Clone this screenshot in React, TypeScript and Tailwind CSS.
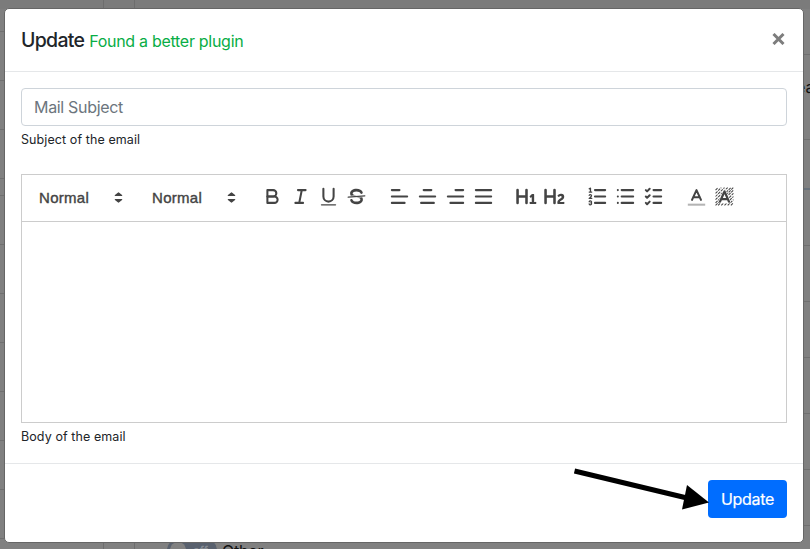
import type { ReactNode } from "react";

function Icon({ children }: { children: ReactNode }) {
  return (
    <button className="flex h-7 w-7 items-center justify-center">
      <svg
        viewBox="0 0 18 18"
        className="mb-[3px] h-[23px] w-[23px] shrink-0"
        fill="none"
        stroke="#444"
        strokeWidth="1.6"
        strokeLinecap="round"
        strokeLinejoin="round"
      >
        {children}
      </svg>
    </button>
  );
}

function Lines({ rows }: { rows: number[][] }) {
  return <>{rows.map(([a, b, y]) => <path key={y} d={`M${a},${y}H${b}`} />)}</>;
}

function Picker() {
  return (
    <button className="mr-[15px] flex h-6 w-[98px] items-center justify-between pl-[9px] font-['Liberation_Sans',sans-serif] text-[15px] text-[#444] [-webkit-text-stroke:0.4px_#444]">
      <span className="tracking-[0.3px]">Normal</span>
      <svg viewBox="0 0 18 18" className="mb-[2px] h-[19px] w-[19px]" fill="#444" stroke="#444" strokeWidth="1.2" strokeLinejoin="round">
        <path d="M6,11L9,13.3L12,11ZM6,7L9,4.7L12,7Z" />
      </svg>
    </button>
  );
}

function Group({ children }: { children: ReactNode }) {
  return <div className="mr-[15px] flex">{children}</div>;
}

const leftRows = [31, 80, 129, 178, 195, 244, 293, 342, 391, 440, 489, 538];
const rightRows = [54, 139, 245, 301, 357, 413, 469, 525];

export default function App() {
  return (
    <div className="relative h-[549px] w-[810px] overflow-hidden bg-[#808080] font-[Inter,sans-serif]">
      <svg className="absolute inset-0" width="810" height="549" shapeRendering="crispEdges">
        <rect width="810" height="9" fill="#7b7b7b" />
        <path d="M103.5,0V549M134.5,0V549" stroke="#6d6d6d" />
        {leftRows.map((y) => <path key={y} d={`M0,${y}.5H104`} stroke="#6f6f6f" />)}
        {rightRows.map((y) => <path key={y} d={`M134,${y}.5H810`} stroke="#6f6f6f" />)}
        <rect x="134" y="188" width="676" height="2" fill="#67717b" />
      </svg>
      <span className="absolute left-[796px] top-[77px] text-[16px] leading-5 text-[#111]">ea</span>
      <div className="absolute left-[167px] top-[539px] flex h-[22px] w-[50px] items-center rounded-full bg-[#59616e] pl-[3px]">
        <span className="h-4 w-4 rounded-full bg-[#818181]" />
        <span className="ml-[7px] text-[11px] font-bold leading-3 text-[#858b93]">off</span>
      </div>
      <span className="absolute left-[222px] top-[541px] text-[16px] leading-5 tracking-[-0.2px] text-[#111]">Other</span>

      <div className="absolute left-[4px] top-[8px] flex h-[535px] w-[800px] flex-col rounded-[5px] border border-[#666] bg-white">
        <header className="flex h-[63px] shrink-0 items-center justify-between border-b border-[#e5e7e9] px-4">
          <h5 className="flex items-baseline whitespace-nowrap text-[19.5px] font-medium leading-[30px] tracking-[-0.72px] text-[#212529]">
            Update
            <small className="ml-[5px] text-[16px] font-normal tracking-[-0.29px] text-[#08ad45]">Found a better plugin</small>
          </h5>
          <button aria-label="Close" className="mr-[2px] mt-[-3px]">
            <svg width="13" height="12" viewBox="0 0 13 12" stroke="#7d7d7d" strokeWidth="3">
              <path d="M1.5,1L11.5,11M11.5,1L1.5,11" />
            </svg>
          </button>
        </header>
        <main className="flex-1 px-4 pt-4">
          <input
            placeholder="Mail Subject"
            className="block h-[38px] w-full rounded-[4px] border border-[#ced4da] px-3 text-[16px] tracking-[-0.32px] text-[#495057] placeholder:text-[#6c757d]"
          />
          <small className="mt-1 block text-[12.5px] leading-[19px] tracking-[0.09px] text-[#212529]">Subject of the email</small>
          <div className="mt-[25px] flex h-12 items-center border border-[#ccc] pl-2">
            <Picker />
            <Picker />
            <span className="w-[2px]" />
            <Group>
              <Icon>
                <path d="M5,4H9.5A2.5,2.5,0,0,1,12,6.5A2.5,2.5,0,0,1,9.5,9H5Z" />
                <path d="M5,9H10.5A2.5,2.5,0,0,1,13,11.5A2.5,2.5,0,0,1,10.5,14H5Z" />
              </Icon>
              <Icon><path d="M7,4H13M5,14H11M8,14L10,4" /></Icon>
              <Icon>
                <path d="M5,3V9a4,4,0,0,0,8,0V3" />
                <rect x="3" y="15" width="12" height="1" rx=".5" fill="#444" stroke="none" />
              </Icon>
              <Icon>
                <path d="M15.5,8.5L2.5,9.5" strokeWidth="1" />
                <g fill="#444" stroke="none">
                  <path d="M9.007,8C6.542,7.791,6,7.519,6,6.5,6,5.792,7.283,5,9,5c1.571,0,2.765.679,2.969,1.309a1,1,0,0,0,1.9-.617C13.356,4.106,11.354,3,9,3,6.2,3,4,4.538,4,6.5a3.2,3.2,0,0,0,.5,1.843Z" />
                  <path d="M8.984,10C11.457,10.208,12,10.479,12,11.5c0,.708-1.283,1.5-3,1.5-1.571,0-2.765-.679-2.969-1.309a1,1,0,1,0-1.9.617C4.644,13.894,6.646,15,9,15c2.8,0,5-1.538,5-3.5a3.2,3.2,0,0,0-.5-1.843Z" />
                </g>
              </Icon>
            </Group>
            <Group>
              <Icon><Lines rows={[[3, 9, 4], [3, 15, 9], [3, 13, 14]]} /></Icon>
              <Icon><Lines rows={[[6, 12, 4], [3, 15, 9], [4, 14, 14]]} /></Icon>
              <Icon><Lines rows={[[9, 15, 4], [3, 15, 9], [5, 15, 14]]} /></Icon>
              <Icon><Lines rows={[[3, 15, 4], [3, 15, 9], [3, 15, 14]]} /></Icon>
            </Group>
            <Group>
              <Icon>
                <path fill="#444" stroke="none" d="M10,4V14a1,1,0,0,1-2,0V10H3v4a1,1,0,0,1-2,0V4A1,1,0,0,1,3,4V8H8V4a1,1,0,0,1,2,0Zm6.06787,9.209H14.98975V7.59863a.54085.54085,0,0,0-.605-.60547h-.62744a1.01119,1.01119,0,0,0-.748.29688L11.645,8.56641a.5435.5435,0,0,0-.022.8584l.28613.30762a.53861.53861,0,0,0,.84717.0332l.09912-.08789a1.2137,1.2137,0,0,0,.2417-.35254h.02246s-.01123.30859-.01123.60547V13.209H12.041a.54085.54085,0,0,0-.605.60547v.43945a.54085.54085,0,0,0,.605.60547h4.02686a.54085.54085,0,0,0,.605-.60547v-.43945A.54085.54085,0,0,0,16.06787,13.209Z" />
              </Icon>
              <Icon>
                <path fill="#444" stroke="none" d="M16.73975,13.81445v.43945a.54085.54085,0,0,1-.605.60547H11.855a.58392.58392,0,0,1-.64893-.60547V14.0127c0-2.90527,3.39941-3.42187,3.39941-4.55469a.77675.77675,0,0,0-.84717-.78125,1.17684,1.17684,0,0,0-.83594.38477c-.2749.26367-.561.374-.85791.13184l-.4292-.34082c-.30811-.24219-.38525-.51758-.1543-.81445a2.97155,2.97155,0,0,1,2.45361-1.17676,2.45393,2.45393,0,0,1,2.68408,2.40918c0,2.45312-3.1792,2.92676-3.27832,3.93848h2.79443A.54085.54085,0,0,1,16.73975,13.81445ZM9,3A.99974.99974,0,0,0,8,4V8H3V4A1,1,0,0,0,1,4V14a1,1,0,0,0,2,0V10H8v4a1,1,0,0,0,2,0V4A.99974.99974,0,0,0,9,3Z" />
              </Icon>
            </Group>
            <Group>
              <Icon>
                <Lines rows={[[7, 15, 4], [7, 15, 9], [7, 15, 14]]} />
                <g strokeWidth="1">
                  <path d="M2.5,5.5H4.5M2.5,3L3.5,2.5V5.5" />
                  <path d="M4.5,10.5h-2c0-.234,1.85-1.076,1.85-2.234A0.959,0.959,0,0,0,2.5,8.156" />
                  <path d="M2.5,14.846a0.959,0.959,0,0,0,1.85-.109A0.7,0.7,0,0,0,3.75,14a0.688,0.688,0,0,0,.6-0.736,0.959,0.959,0,0,0-1.85-.109" />
                </g>
              </Icon>
              <Icon>
                <Lines rows={[[6, 15, 4], [6, 15, 9], [6, 15, 14]]} />
                <path d="M3,4h.01M3,9h.01M3,14h.01" />
              </Icon>
              <Icon>
                <Lines rows={[[9, 15, 4], [9, 15, 9], [9, 15, 14]]} />
                <path d="M3,4L4,5L6,3M3,9L4,10L6,8M3,14L4,15L6,13" />
              </Icon>
            </Group>
            <Group>
              <Icon>
                <path d="M3,15.4H15" opacity=".4" strokeLinecap="square" />
                <path d="M5.5,11.6L9,4L12.5,11.6M11.63,9.6H6.38" />
              </Icon>
              <Icon>
                <path
                  strokeWidth=".8"
                  strokeLinecap="butt"
                  strokeDasharray="2.2 .7"
                  d="M2,4L4,2M2,6.5L6.5,2M2,9L9,2M2,11.5L11.5,2M2,14L14,2M2,16L16,2M4,16L16,4M6.5,16L16,6.5M9,16L16,9M11.5,16L16,11.5M14,16L16,14"
                />
                <path d="M5.5,13L9,5L12.5,13Z" stroke="#fff" strokeWidth="2.6" fill="#fff" />
                <path d="M5.5,13L9,5L12.5,13M11.63,11H6.38" strokeWidth="1.8" />
              </Icon>
            </Group>
          </div>
          <div className="h-[201px] border border-t-0 border-[#ccc]" />
          <small className="mt-1 block text-[12.5px] leading-[19px] tracking-[0.09px] text-[#212529]">Body of the email</small>
        </main>
        <footer className="flex h-[79px] shrink-0 items-start justify-end border-t border-[#e5e7e9] px-4 pt-4">
          <button className="h-[38px] w-[79px] rounded-[4px] bg-[#006dff] text-[16px] tracking-[-0.3px] text-white [-webkit-text-stroke:0.2px_#fff]">Update</button>
        </footer>
      </div>

      <svg className="pointer-events-none absolute left-[570px] top-[460px]" width="142" height="56">
        <path d="M4.5,11L117,38" stroke="#000" strokeWidth="5" />
        <path d="M117,25L139,42.5L112,49.5Z" fill="#000" />
      </svg>
    </div>
  );
}
